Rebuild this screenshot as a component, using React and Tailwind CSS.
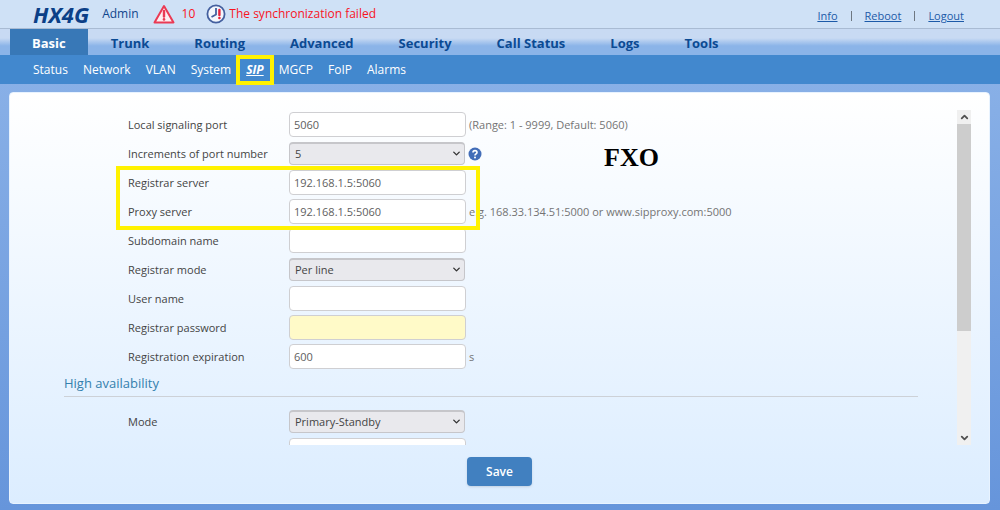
import React, { useState } from 'react';
import { ChevronDown, ChevronUp } from 'lucide-react';

const TABS = ['Basic', 'Trunk', 'Routing', 'Advanced', 'Security', 'Call Status', 'Logs', 'Tools'];
const PAGES = ['Status', 'Network', 'VLAN', 'System', 'SIP', 'MGCP', 'FoIP', 'Alarms'];

function AlertIcon() {
  return (
    <svg className="w-[22px] h-5" viewBox="0 0 22 20" fill="none">
      <path d="M11 2 L20.5 18.5 H1.5 Z" fill="#fdeef1" stroke="#ea3a54" strokeWidth="2" strokeLinejoin="round" />
      <path d="M11 7 V12.5" stroke="#ea3a54" strokeWidth="2.4" strokeLinecap="round" />
      <circle cx="11" cy="15.4" r="1.3" fill="#ea3a54" />
    </svg>
  );
}

function ClockIcon() {
  return (
    <svg className="w-5 h-5" viewBox="0 0 20 20" fill="none">
      <circle cx="10" cy="10" r="8.6" fill="#f3f7fd" stroke="#44609f" strokeWidth="1.8" />
      <path d="M10 4 V10.5 L5.5 13" stroke="#44609f" strokeWidth="1.8" />
      <path d="M13.4 6 V11" stroke="#e8203a" strokeWidth="2.4" strokeLinecap="round" />
      <circle cx="13.4" cy="14" r="1.3" fill="#e8203a" />
    </svg>
  );
}

function Row({ id, label, hint, children }) {
  return (
    <div className="flex items-center h-[29px] pl-16">
      <label htmlFor={id} className="w-[161px] shrink-0 pt-px text-[#444]">{label}</label>
      {children}
      {hint && <span className="ml-[3px] pt-px text-[#747474] whitespace-nowrap">{hint}</span>}
    </div>
  );
}

function TextField({ id, label, hint, value = '', type = 'text', filled, ariaLabel }) {
  const [text, setText] = useState(value);
  return (
    <Row id={id} label={label} hint={hint}>
      <input
        id={id}
        type={type}
        value={text}
        aria-label={ariaLabel}
        onChange={(e) => setText(e.target.value)}
        className={`w-[177px] h-[25px] shrink-0 px-1 rounded border border-[#cfcfd2] text-[#606060] outline-none ${filled ? 'bg-[#fffac8]' : 'bg-white'}`}
      />
    </Row>
  );
}

function SelectField({ id, label, options, hint }) {
  return (
    <Row id={id} label={label} hint={hint}>
      <div className="relative w-44 shrink-0">
        <select
          id={id}
          className="block appearance-none w-full h-[23px] pl-[5px] rounded border border-t-2 border-[#c6c6ca] bg-[#e9e9ed] text-[#444] outline-none"
        >
          {options.map((option) => <option key={option}>{option}</option>)}
        </select>
        <ChevronDown className="absolute right-[3px] top-[6px] w-[11px] h-[11px] text-[#333] pointer-events-none" strokeWidth={3} />
      </div>
    </Row>
  );
}

export default function App() {
  const [tab, setTab] = useState('Basic');

  return (
    <div className="h-screen min-h-[400px] flex flex-col overflow-hidden bg-linear-to-b from-[#8fb5e9] to-[#6695db] font-['Open_Sans',sans-serif] text-[11px]">
      {/* Top bar */}
      <header className="h-[29px] shrink-0 flex items-center pl-[33px] pr-9 bg-[#cfe1f6] border-b border-[#a9bbd3] text-xs">
        <h1 className="font-['Noto_Sans',sans-serif] text-[22px] leading-7 font-bold italic text-[#0b3f87]">HX4G</h1>
        <span className="ml-[13px] text-[#0f458c]">Admin</span>
        <div className="ml-[14px] flex items-center gap-[7px] text-[#f8141e]">
          <AlertIcon />
          <span>10</span>
        </div>
        <div className="ml-[11px] flex items-center gap-[3px] text-[#f8141e]">
          <ClockIcon />
          <span>The synchronization failed</span>
        </div>
        <div className="ml-auto flex items-center gap-[13px] pt-1 text-[11px] text-[#1c5aa8]">
          <a href="#info" className="underline">Info</a>
          <span className="w-px h-[10px] bg-[#6e7781]" />
          <a href="#reboot" className="underline">Reboot</a>
          <span className="w-px h-[10px] bg-[#6e7781]" />
          <a href="#logout" className="underline">Logout</a>
        </div>
      </header>

      {/* Main tabs */}
      <nav className="h-[26px] shrink-0 flex gap-px pl-[10px] bg-linear-to-b from-[#c8daf3] from-35% to-[#8bb4e8] to-65% text-[13px] font-bold">
        {TABS.map((name) => (
          <button
            key={name}
            onClick={() => setTab(name)}
            className={`px-[22px] pt-[3px] ${name === tab ? 'bg-[#3878b7] text-white' : 'text-[#0b4a93]'}`}
          >
            {name}
          </button>
        ))}
      </nav>

      {/* Pages of the selected tab */}
      <nav className="h-[29px] shrink-0 flex items-center gap-[15px] pl-[33px] bg-[#4288ce] text-xs text-white">
        {PAGES.map((name) => (
          name === 'SIP' ? (
            <a key={name} href="#sip" className="relative font-bold italic underline">
              {name}
              <span className="absolute -inset-x-[10px] -inset-y-[7px] border-4 border-[#fff200] pointer-events-none" />
            </a>
          ) : (
            <a key={name} href={`#${name.toLowerCase()}`}>{name}</a>
          )
        ))}
      </nav>

      <main className="flex-1 min-h-0 flex flex-col mt-2 ml-[9px] mr-[10px] mb-[6px] pr-[18px] rounded border border-[#e8f3ff] bg-linear-to-b from-white to-[#dcedff]">
        <div className="flex-1 min-h-0 flex mt-[17px]">
          <form className="relative flex-1 overflow-hidden pl-[54px] pr-[39px]">
            <TextField id="port" label="Local signaling port" value="5060" hint="(Range: 1 - 9999, Default: 5060)" />
            <SelectField
              id="increments"
              label="Increments of port number"
              options={['5', '1', '2', '10']}
              hint={(
                <svg className="w-[14px] h-[14px]" viewBox="0 0 14 14">
                  <circle cx="7" cy="7" r="6.5" fill="#426db8" />
                  <path d="M5 5.5 Q5 3.6 7 3.6 T9 5.4 Q9 6.4 7.9 7 Q7 7.5 7 8.4" fill="none" stroke="white" strokeWidth="1.6" />
                  <circle cx="7" cy="10.4" r="1" fill="white" />
                </svg>
              )}
            />
            <TextField id="registrar" label="Registrar server" value="192.168.1.5:5060" />
            <TextField id="proxy" label="Proxy server" value="192.168.1.5:5060" hint="e.g. 168.33.134.51:5000 or www.sipproxy.com:5000" />
            <TextField id="subdomain" label="Subdomain name" />
            <SelectField id="mode" label="Registrar mode" options={['Per line', 'Per gateway']} />
            <TextField id="user" label="User name" />
            <TextField id="password" label="Registrar password" type="password" filled />
            <TextField id="expiration" label="Registration expiration" value="600" hint="s" />

            <h2 className="h-[26px] mb-[10px] text-[13px] leading-6 text-[#3480ad] border-b border-[#cdd1d7]">High availability</h2>
            <SelectField id="ha-mode" label="Mode" options={['Primary-Standby', 'Load balance']} />
            <TextField id="primary" ariaLabel="Primary server" />

            {/* Callouts over the form */}
            <div className="absolute left-[106px] top-14 w-[364px] h-16 border-4 border-[#fff200] pointer-events-none" />
            <p className="absolute left-[594px] top-8 font-['Liberation_Serif',serif] text-[26px] leading-8 font-bold text-black">FXO</p>
          </form>

          <div className="w-[14px] flex flex-col items-center bg-[#f0f0f0] text-[#505050]">
            <ChevronUp className="w-[11px] h-[14px] shrink-0" strokeWidth={4} />
            <div className="w-full h-[207px] bg-[#cdcdcd]" />
            <ChevronDown className="w-[11px] h-[14px] shrink-0 mt-auto" strokeWidth={4} />
          </div>
        </div>

        <footer className="shrink-0 flex justify-center pt-3 pb-[17px] pl-[18px]">
          <button className="w-[65px] h-[29px] rounded-sm bg-[#4180c0] text-xs font-semibold text-white shadow-sm">Save</button>
        </footer>
      </main>
    </div>
  );
}
